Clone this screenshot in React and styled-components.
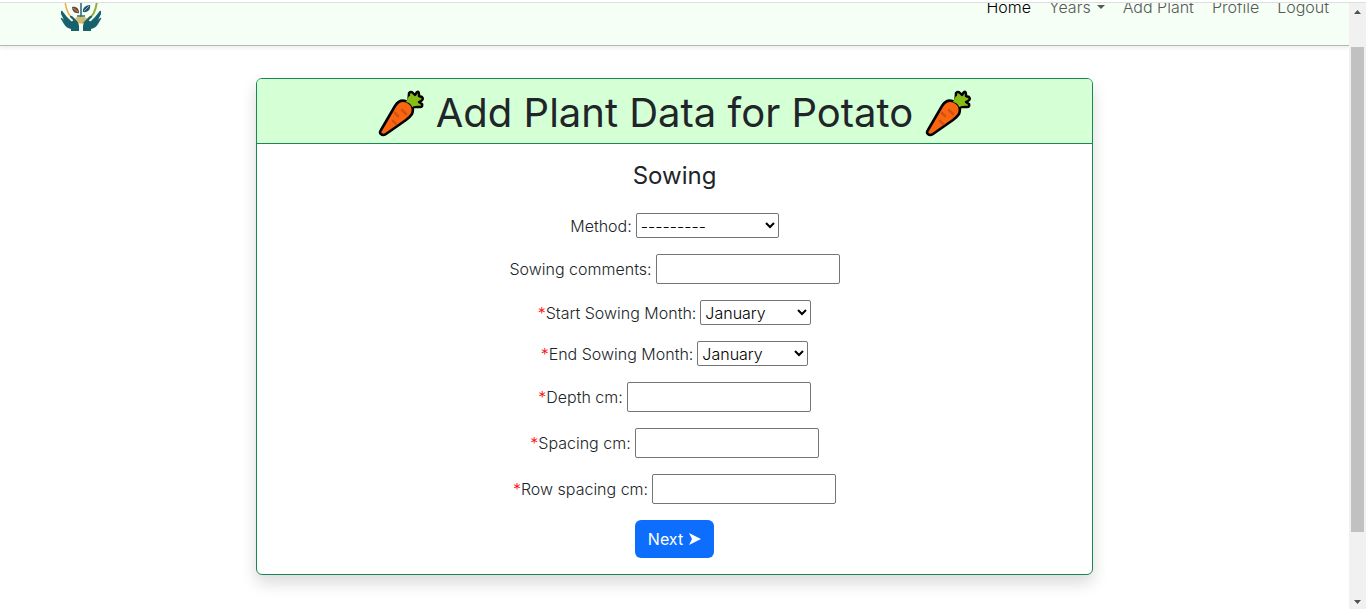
import React from "react";
import styled, { createGlobalStyle } from "styled-components";

const GlobalStyle = createGlobalStyle`
  *, *::before, *::after { box-sizing: border-box; }
  body {
    margin: 0;
    background: #fff;
    color: #212529;
    font-family: Inter, "Liberation Sans", sans-serif;
    font-size: 16px;
    font-weight: 300;
    line-height: 24px;
  }
`;

const Page = styled.div`
  display: flex;
  flex-direction: column;
  height: 100vh;
  overflow: hidden;
`;

const TopEdge = styled.div`
  flex: none;
  height: 3px;
  background: #fff;
  border-bottom: 1px solid #dedfe0;
`;

const Viewport = styled.div`
  display: flex;
  flex: 1;
  min-height: 0;
`;

const Content = styled.div`
  flex: 1;
  min-width: 0;
  overflow: hidden;
`;

const Navbar = styled.header`
  display: flex;
  align-items: flex-end;
  justify-content: space-between;
  height: 43px;
  padding: 0 20px 14px 60px;
  overflow: hidden;
  background: #f5fff5;
  border-bottom: 1px solid #b4b8b4;
`;

const NavShadow = styled.div`
  box-shadow: 0 2px 4px rgba(0, 0, 0, 0.08);
`;

const Brand = styled.a`
  display: block;
  height: 48px;
`;

const NavLinks = styled.nav`
  display: flex;
  align-items: center;
  gap: 18px;
  height: 48px;
`;

const NavLink = styled.a`
  display: flex;
  align-items: center;
  gap: 6px;
  color: ${(p) => (p.$active ? "#000" : "#565a56")};
  text-decoration: none;
`;

const Caret = styled.span`
  border: 4px solid transparent;
  border-top-color: currentColor;
  border-bottom: 0;
`;

const Main = styled.main`
  display: flex;
  justify-content: center;
  padding: 32px 0;
`;

const Card = styled.section`
  width: 62%;
  border: 1px solid #198754;
  border-radius: 6px;
  background: #fff;
  box-shadow: 0 8px 16px rgba(0, 0, 0, 0.15);
`;

const CardHeader = styled.div`
  display: flex;
  align-items: center;
  justify-content: center;
  gap: 12px;
  height: 65px;
  padding-top: 3px;
  border-bottom: 1px solid #198754;
  border-radius: 5px 5px 0 0;
  background: #d5ffd5;
`;

const Title = styled.h1`
  margin: 0;
  font-size: 40px;
  font-weight: 400;
  line-height: 48px;
  white-space: nowrap;
`;

const Form = styled.form`
  display: flex;
  flex-direction: column;
  align-items: center;
  gap: 16px;
  padding: 16px;
`;

const Subtitle = styled.h2`
  margin: 0 0 6px;
  font-size: 24px;
  font-weight: 400;
  line-height: 31px;
`;

const Field = styled.div`
  display: flex;
  align-items: center;
  gap: 4px;
`;

const Label = styled.label`
  white-space: nowrap;
`;

const Required = styled.span`
  color: #f00;
`;

const Select = styled.select`
  width: ${(p) => (p.$wide ? 143 : 111)}px;
  height: 25px;
  padding: 0;
  border: 1px solid #767676;
  border-radius: 2px;
  background: #fff;
  color: #000;
  font: inherit;
`;

const TextInput = styled.input`
  width: 184px;
  height: 30px;
  padding: 1px 2px;
  border: 1px solid #767676;
  border-radius: 2px;
  background: #fff;
  font: inherit;
`;

const NextButton = styled.button`
  display: flex;
  align-items: center;
  gap: 6px;
  height: 38px;
  padding: 0 13px;
  border: 0;
  border-radius: 6px;
  background: #0d6efd;
  color: #fff;
  font: inherit;
  font-weight: 400;
`;

const Scrollbar = styled.div`
  display: flex;
  flex-direction: column;
  align-items: center;
  justify-content: space-between;
  flex: none;
  width: 17px;
  padding: 7px 0 5px;
  background: #f1f1f1;
`;

const Thumb = styled.div`
  flex: 1;
  width: 13px;
  margin: 33px 0 68px;
  background: #c1c1c1;
`;

const Arrow = styled.svg`
  display: block;
  width: 7px;
  height: 4px;
  fill: #505050;
`;

const Logo = () => (
  <svg width="42" height="48" viewBox="0 0 42 48" role="img" aria-label="Plant hands">
    <path d="M5 18C6 27 8 33 14 36L20 40" fill="none" stroke="#e5b04c" strokeWidth="1.5" />
    <path d="M37 18C36 27 34 33 28 36L22 40" fill="none" stroke="#91ad35" strokeWidth="2" />
    <path d="M21 12V34" stroke="#356d80" strokeWidth="1.6" />
    <path d="M15 35Q21 32 27 35L21 41Z" fill="#d5bb72" />
    <path d="M17 33H25" stroke="#356d80" strokeWidth="1.5" />
    <path d="M19 30C15 31 12 28 12 24C16 23 19 25 19 30Z" fill="#704634" />
    <path d="M23 29C22 25 26 22 30 22C31 26 28 30 23 29Z" fill="#24576a" />
    <path d="M13 25L18 29" stroke="#d5b8a8" strokeWidth="0.7" />
    <path d="M29 23L24 28" stroke="#b9d0d6" strokeWidth="0.7" />
    <path d="M1 28Q2 27 3 29L7 34L11 38Q13 39 13 37L10 34Q10 32 12 33L17 38Q19 40 19 43V48H11V46Q6 45 4 41L1 36Q0 34 2 35L4 37L1 31Z" fill="#17606c" />
    <path d="M41 28Q40 27 39 29L35 34L31 38Q29 39 29 37L32 34Q32 32 30 33L25 38Q23 40 23 43V48H31V46Q36 45 38 41L41 36Q42 34 40 35L38 37L41 31Z" fill="#17606c" />
  </svg>
);

const Carrot = () => (
  <svg width="46" height="48" viewBox="0 0 46 48" aria-hidden="true">
    <path d="M30 17L31 4Q33 2 35 4L37 6L39 3Q41 2 41 5V7L44 8Q46 10 43 12L41 13L44 15Q45 18 42 18L34 18Z" fill="#86bd17" stroke="#000" strokeWidth="2.4" strokeLinejoin="round" />
    <path d="M3 41L17 17Q22 9 30 13Q37 17 34 25Q32 28 28 31L8 45Q5 47 3 45Q1 44 3 41Z" fill="#fb6510" stroke="#000" strokeWidth="2.6" strokeLinejoin="round" />
    <path d="M28 13L31 7L38 9L40 16L34 18Q33 14 28 13Z" fill="#86bd17" />
    <path d="M17 24L20 27M24 21L28 25M15 32L18 35" stroke="#cf5313" strokeWidth="2.6" strokeLinecap="round" />
  </svg>
);

const months = ["January", "February", "March", "April", "May", "June", "July", "August", "September", "October", "November", "December"];
const methods = ["---------", "Direct sow", "Indoors"];

const fields = [
  { id: "method", label: "Method:", options: methods, wide: true },
  { id: "comments", label: "Sowing comments:" },
  { id: "start", label: "Start Sowing Month:", required: true, options: months },
  { id: "end", label: "End Sowing Month:", required: true, options: months },
  { id: "depth", label: "Depth cm:", required: true },
  { id: "spacing", label: "Spacing cm:", required: true },
  { id: "row-spacing", label: "Row spacing cm:", required: true },
];

const FormField = ({ id, label, required, options, wide }) => (
  <Field>
    <Label htmlFor={id}>
      {required && <Required>*</Required>}
      {label}
    </Label>
    {options ? (
      <Select id={id} $wide={wide}>
        {options.map((o) => (
          <option key={o}>{o}</option>
        ))}
      </Select>
    ) : (
      <TextInput id={id} type="text" />
    )}
  </Field>
);

export default function App() {
  return (
    <Page>
      <GlobalStyle />
      <TopEdge />
      <Viewport>
        <Content>
          <NavShadow>
            <Navbar>
              <Brand href="#"><Logo /></Brand>
              <NavLinks>
                <NavLink href="#" $active>Home</NavLink>
                <NavLink href="#">Years <Caret /></NavLink>
                <NavLink href="#">Add Plant</NavLink>
                <NavLink href="#">Profile</NavLink>
                <NavLink href="#">Logout</NavLink>
              </NavLinks>
            </Navbar>
          </NavShadow>
          <Main>
            <Card>
              <CardHeader>
                <Carrot />
                <Title>Add Plant Data for Potato</Title>
                <Carrot />
              </CardHeader>
              <Form onSubmit={(e) => e.preventDefault()}>
                <Subtitle>Sowing</Subtitle>
                {fields.map((f) => (
                  <FormField key={f.id} {...f} />
                ))}
                <NextButton type="submit">
                  Next
                  <svg width="12" height="12" viewBox="0 0 12 12" aria-hidden="true">
                    <path d="M0 0L12 6L0 12L3 6Z" fill="currentColor" />
                  </svg>
                </NextButton>
              </Form>
            </Card>
          </Main>
        </Content>
        <Scrollbar aria-hidden="true">
          <Arrow viewBox="0 0 7 4"><path d="M0 4L3.5 0L7 4Z" /></Arrow>
          <Thumb />
          <Arrow viewBox="0 0 7 4"><path d="M0 0L3.5 4L7 0Z" /></Arrow>
        </Scrollbar>
      </Viewport>
    </Page>
  );
}
